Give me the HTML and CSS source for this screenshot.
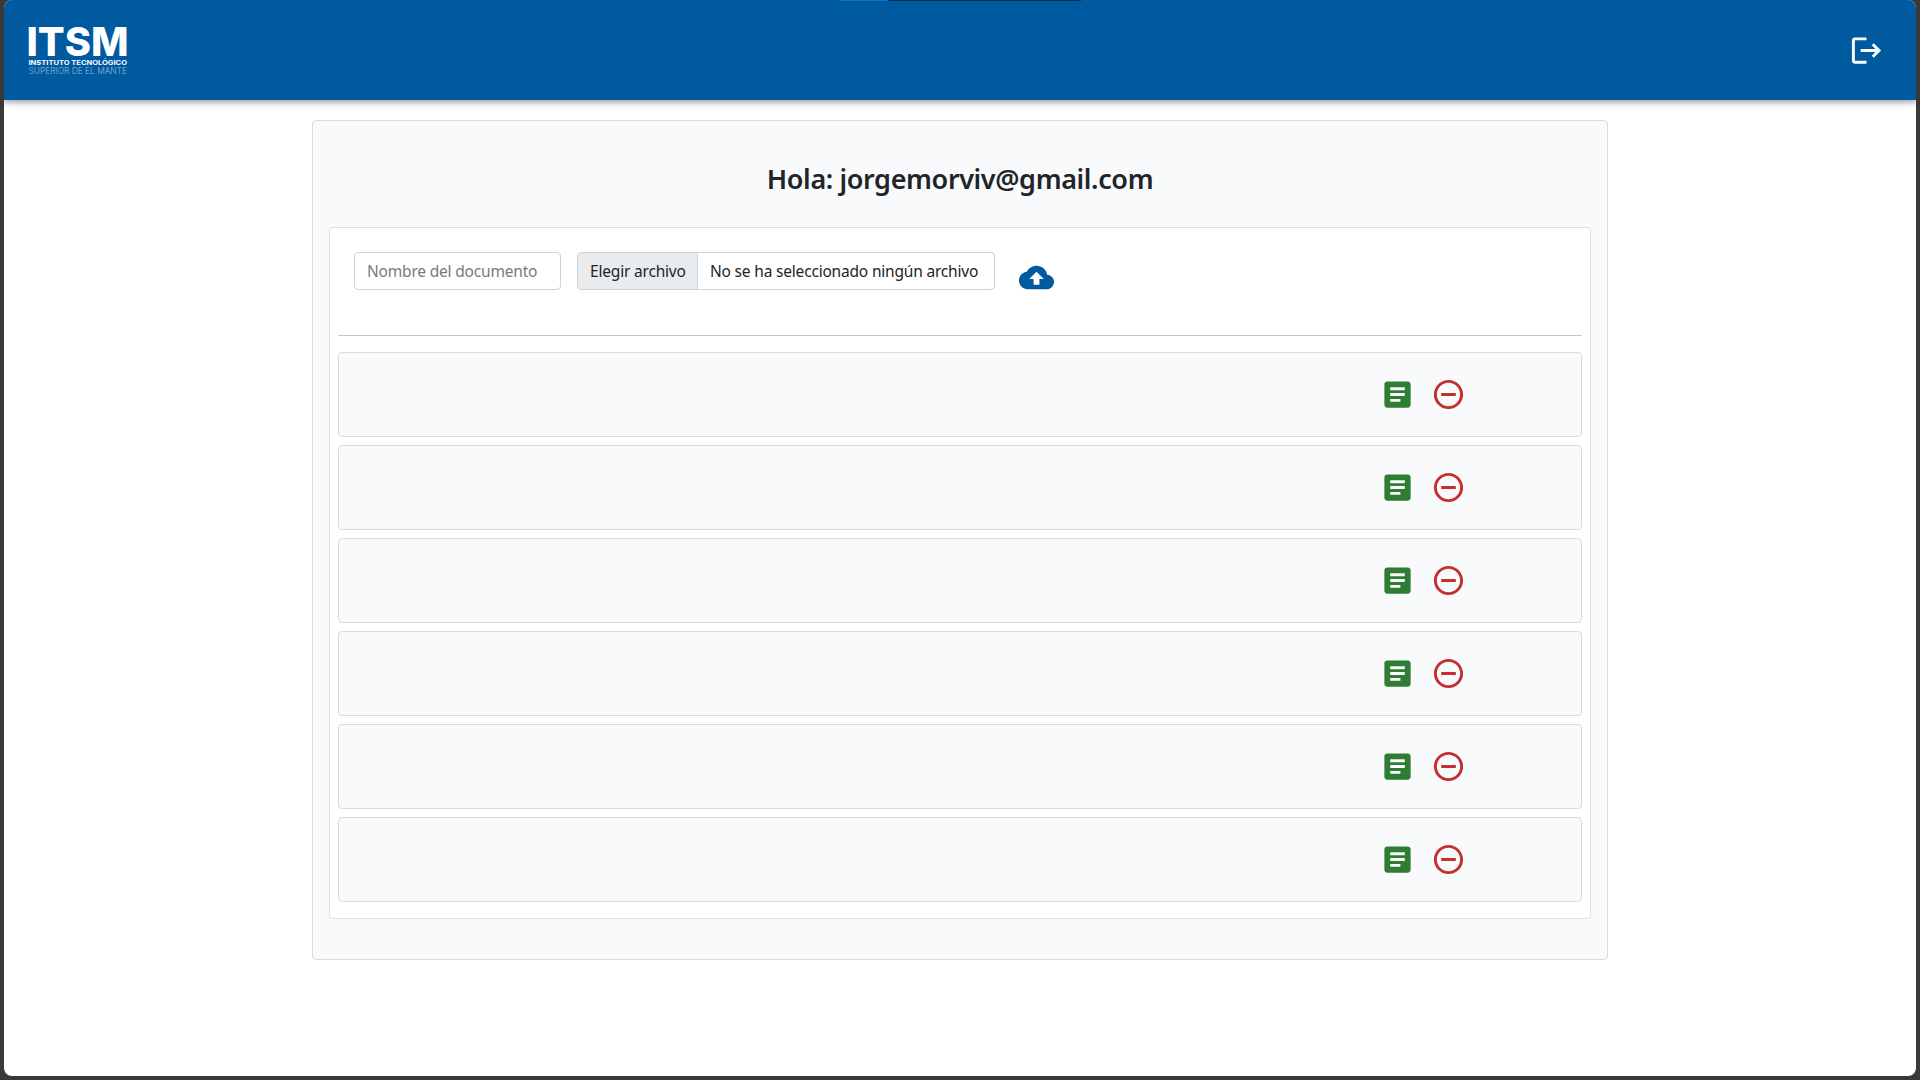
FILE: index.html
```html
<!DOCTYPE html>
<html lang="es">
<head>
<meta charset="utf-8">
<title>ITSM Documentos</title>
<link rel="stylesheet" href="styles.css">
</head>
<body>
<svg class="symbols" width="0" height="0">
  <symbol id="doc" viewBox="0 0 24 24"><path d="M19 3H5c-1.100 0-2 .9-2 2v14c0 1.100.9 2 2 2h14c1.100 0 2-.9 2-2V5c0-1.100-.9-2-2-2zm-5 14H7v-2h7v2zm3-4H7v-2h10v2zm0-4H7V7h10v2z"/></symbol>
  <symbol id="remove" viewBox="0 0 24 24"><path d="M7 11v2h10v-2H7zm5-9C6.480 2 2 6.480 2 12s4.480 10 10 10 10-4.480 10-10S17.520 2 12 2zm0 18c-4.410 0-8-3.590-8-8s3.590-8 8-8 8 3.590 8 8-3.590 8-8 8z"/></symbol>
</svg>
<div class="window">
  <span class="tab-strip"></span>
  <header class="navbar">
    <svg class="logo" viewBox="0 0 100 50" role="img" aria-label="ITSM">
      <text class="logo-name" x="-1.500" y="31.400" textLength="102" lengthAdjust="spacingAndGlyphs">ITSM</text>
      <text class="logo-line" x="0.500" y="39.800" textLength="98.500" lengthAdjust="spacingAndGlyphs">INSTITUTO TECNOLÓGICO</text>
      <text class="logo-sub" x="0.500" y="49" textLength="98.500" lengthAdjust="spacingAndGlyphs">SUPERIOR DE EL MANTE</text>
    </svg>
    <button class="icon-btn logout" aria-label="Salir"><svg viewBox="0 0 24 24"><path d="M17 7l-1.410 1.410L18.170 11H8v2h10.170l-2.580 2.580L17 17l5-5zM4 5h8V3H4c-1.100 0-2 .9-2 2v14c0 1.100.9 2 2 2h8v-2H4V5z"/></svg></button>
  </header>
  <main class="panel">
    <h3 class="greeting"><span>Hola: jorgemorviv@gmail.com</span></h3>
    <section class="card">
      <form class="upload">
        <input class="name-input" type="text" placeholder="Nombre del documento">
        <div class="file-input">
          <span class="file-btn">Elegir archivo</span>
          <span class="file-text">No se ha seleccionado ningún archivo</span>
        </div>
        <button class="icon-btn cloud" type="button" aria-label="Subir"><svg viewBox="0 0 24 24"><path d="M19.350 10.040C18.670 6.590 15.640 4 12 4 9.110 4 6.600 5.640 5.350 8.040 2.340 8.360 0 10.910 0 14c0 3.310 2.690 6 6 6h13c2.760 0 5-2.240 5-5 0-2.640-2.050-4.780-4.650-4.960zM14 13v4h-4v-4H7l5-5 5 5h-3z"/></svg></button>
      </form>
      <hr class="divider">
      <div class="rows">
        <div class="row"><button class="icon-btn doc"><svg><use href="#doc"/></svg></button><button class="icon-btn remove"><svg><use href="#remove"/></svg></button></div>
        <div class="row"><button class="icon-btn doc"><svg><use href="#doc"/></svg></button><button class="icon-btn remove"><svg><use href="#remove"/></svg></button></div>
        <div class="row"><button class="icon-btn doc"><svg><use href="#doc"/></svg></button><button class="icon-btn remove"><svg><use href="#remove"/></svg></button></div>
        <div class="row"><button class="icon-btn doc"><svg><use href="#doc"/></svg></button><button class="icon-btn remove"><svg><use href="#remove"/></svg></button></div>
        <div class="row"><button class="icon-btn doc"><svg><use href="#doc"/></svg></button><button class="icon-btn remove"><svg><use href="#remove"/></svg></button></div>
        <div class="row"><button class="icon-btn doc"><svg><use href="#doc"/></svg></button><button class="icon-btn remove"><svg><use href="#remove"/></svg></button></div>
      </div>
    </section>
  </main>
</div>
</body>
</html>
```
FILE: styles.css
```css
* { box-sizing: border-box; }
body {
  margin: 0;
  height: 1080px;
  padding: 0 4px 4px;
  background: #3a3838;
  color: #212529;
  font: 15.5px/24px "Noto Sans", "Open Sans", sans-serif;
  overflow: hidden;
}
.symbols { position: absolute; }
.window {
  position: relative;
  height: 1076px;
  background: #fff;
  border-radius: 8px;
  overflow: hidden;
}
.tab-strip {
  position: absolute;
  z-index: 1;
  top: 0;
  left: 836px;
  width: 241px;
  height: 1px;
  background: linear-gradient(to right, #0a74d0 48px, #0b2f4a 48px);
}
.navbar {
  display: flex;
  align-items: center;
  justify-content: space-between;
  height: 100px;
  padding: 0 24px;
  background: #005aa0;
  box-shadow: 0 2px 4px -1px rgba(0,0,0,.2), 0 4px 5px rgba(0,0,0,.14), 0 1px 10px rgba(0,0,0,.12);
}
.logo { width: 100px; height: 50px; fill: #fff; overflow: visible; }
.logo-name { font: 800 40px Inter, sans-serif; }
.logo-line { font: 700 6.2px Inter, sans-serif; }
.logo-sub { font: 300 8.6px Inter, sans-serif; fill: #8fb9da; }
.icon-btn {
  display: flex;
  flex: none;
  width: 51px;
  height: 51px;
  padding: 8px;
  border: 0;
  background: none;
}
.icon-btn svg { width: 35px; height: 35px; fill: currentColor; }
.logout { color: #fff; }
.cloud { color: #005aa0; }
.doc { color: #2e7d32; }
.remove { color: #c62f2f; }
.panel {
  width: 1296px;
  height: 840px;
  margin: 20px auto 0;
  padding: 40px 16px;
  background: #f9fafc;
  border: 1px solid #d9dbdd;
  border-radius: 4px;
}
.greeting {
  height: 34px;
  margin: 0 0 32px;
  font-size: 27px;
  font-weight: 600;
  line-height: 36px;
  text-align: center;
  white-space: nowrap;
  letter-spacing: -.38px;
}
.card {
  height: 692px;
  padding: 24px 8px 16px;
  background: #fff;
  border: 1px solid #dcdee0;
  border-radius: 4px;
}
.upload {
  display: flex;
  align-items: flex-start;
  gap: 16px;
  height: 83px;
  padding-left: 16px;
}
.name-input, .file-input {
  height: 38px;
  border: 1px solid #ced4da;
  border-radius: 4px;
  background: #fff;
}
.name-input {
  width: 207px;
  padding: 0 12px;
  color: #212529;
  font: inherit;
  letter-spacing: -.19px;
}
.name-input::placeholder { color: #747b81; opacity: 1; }
.file-input {
  display: flex;
  width: 418px;
  overflow: hidden;
  line-height: 37px;
  white-space: nowrap;
  letter-spacing: -.19px;
}
.file-btn {
  width: 120px;
  padding-left: 12px;
  background: #e9ecef;
  border-right: 1px solid #ced4da;
}
.file-text { padding-left: 12px; }
.divider { height: 1px; margin: 0 0 16px; border: 0; background: #c4c6c8; }
.rows { display: grid; gap: 8px; }
.row {
  display: flex;
  justify-content: flex-end;
  height: 85px;
  padding: 16px 107px 16px 16px;
  background: #f9fafc;
  border: 1px solid #d9dbdd;
  border-radius: 4px;
}
```
